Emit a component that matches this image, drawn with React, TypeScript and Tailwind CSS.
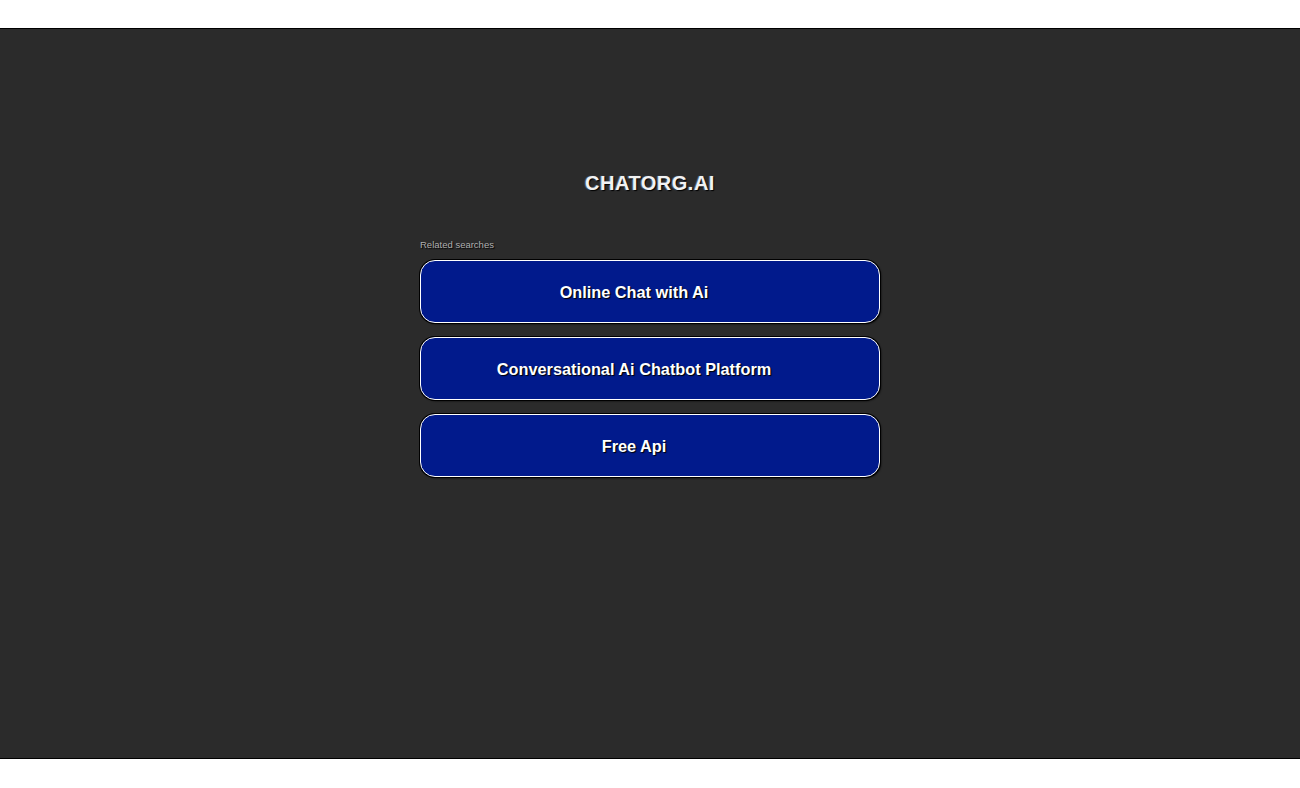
const searches = ["Online Chat with Ai", "Conversational Ai Chatbot Platform", "Free Api"];

export default function App() {
  return (
    <div className="min-h-[788px] bg-white pt-[28px] font-['Liberation_Sans',Arial,sans-serif]">
      <div className="flex h-[731px] flex-col items-center border-y border-black bg-[#2b2b2b]">
        <h1 className="mt-[142px] text-[20px] font-bold leading-[24px] tracking-[0.5px] text-[#f2f2f2] [text-shadow:1px_1px_1px_#000,-1px_0_1px_rgba(120,170,255,0.6)]">
          CHATORG.AI
        </h1>
        <div className="mt-[44px] w-[460px]">
          <div className="mb-[9px] text-[9.5px] leading-[12px] text-[#b0b0b0] [text-shadow:1px_1px_1px_#000]">Related searches</div>
          <div className="flex flex-col gap-[14px]">
            {searches.map((s) => (
              <div
                key={s}
                className="flex h-[63px] items-center justify-center rounded-[15px] border border-white bg-[#011a8c] pr-8 pt-[1px] shadow-[0_0_0_1px_#000,1px_1px_2px_#000] text-[16.3px] font-bold text-white [text-shadow:1px_1px_1px_#000]"
              >
                {s}
              </div>
            ))}
          </div>
        </div>
      </div>
    </div>
  );
}
